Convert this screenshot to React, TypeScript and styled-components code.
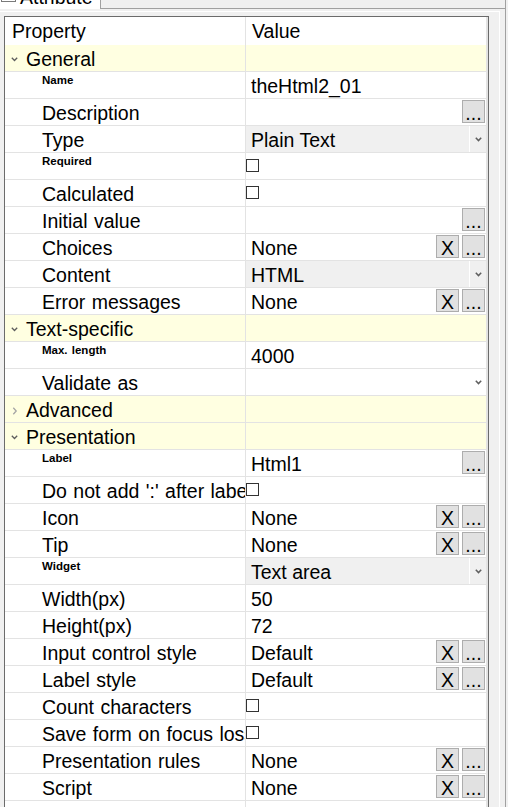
import React from "react";
import styled, { createGlobalStyle } from "styled-components";

const LINE = "#e3e3e3";
const YELLOW = "#ffffe1";
const FONT = `"Liberation Sans", Arial, sans-serif`;

const GlobalStyle = createGlobalStyle`
  *, *::before, *::after { box-sizing: border-box; }
  html, body { margin: 0; padding: 0; background: #f0f0f0; overflow: hidden; }
  body { font-family: ${FONT}; color: #000; }
`;

const Window = styled.div`
  width: 508px;
  height: 807px;
  overflow: hidden;
  background: #f0f0f0;
`;

const Frame = styled.div`
  width: 506px;
  height: 100%;
  border-right: 1px solid #a0a0a0;
  display: flex;
  flex-direction: column;
`;

const TabStrip = styled.div`
  display: flex;
  height: 9px;
  flex-shrink: 0;
`;

const Tab = styled.div`
  width: 101px;
  border-right: 1px solid #a0a0a0;
  background: #fff;
  overflow: hidden;
  display: flex;
  align-items: flex-start;
  gap: 3px;
  padding-left: 1px;
`;

const TabLabel = styled.span`
  margin-top: -13px;
  font-size: 19.5px;
  line-height: 20px;
  white-space: nowrap;
`;

const TabIcon = styled.svg`
  margin-top: -13px;
  flex-shrink: 0;
`;

const TabFiller = styled.div`
  flex: 1;
  border-bottom: 1px solid #a0a0a0;
`;

const Page = styled.div`
  flex: 1;
  min-height: 0;
  padding-top: 2px;
  display: flex;
  flex-direction: column;
`;

const Sheet = styled.div`
  width: 500px;
  flex: 1;
  min-height: 0;
  border-top: 1px solid #fff;
  border-right: 1px solid #fff;
  padding: 4px 0 0 4px;
  display: flex;
  flex-direction: column;
`;

const Grid = styled.div`
  width: 485px;
  flex: 1;
  min-height: 0;
  border: 1px solid #6b6b6b;
  border-bottom: none;
  background: #fff;
  overflow: hidden;
`;

const Row = styled.div<{ $header?: boolean }>`
  display: grid;
  grid-template-columns: 240px 240px;
  column-gap: 1px;
  padding-right: 2px;
  height: ${(p) => (p.$header ? "28px" : "27px")};
  border-bottom: ${(p) => (p.$header ? "none" : `1px solid ${LINE}`)};
  background: ${LINE};
`;

const HeadCell = styled.div<{ $indent: number }>`
  background: #fff;
  padding-left: ${(p) => p.$indent}px;
  font-size: 19.5px;
  line-height: 28px;
  white-space: nowrap;
`;

const NameCell = styled.div<{ $category?: boolean }>`
  background: ${(p) => (p.$category ? YELLOW : "#fff")};
  display: flex;
  align-items: flex-start;
  overflow: hidden;
  white-space: nowrap;
  min-width: 0;
`;

const Caption = styled.span<{ $small?: boolean }>`
  padding: 2px 0 0 37px;
  font-size: ${(p) => (p.$small ? "11.5px" : "19.5px")};
  font-weight: ${(p) => (p.$small ? 700 : 400)};
  line-height: ${(p) => (p.$small ? "12px" : "24px")};
  word-spacing: 1px;
`;

const CategoryCaption = styled.span`
  padding-top: 2px;
  margin-left: 8px;
  font-size: 19.5px;
  line-height: 24px;
`;

const ToggleIcon = styled.svg<{ $open: boolean }>`
  flex-shrink: 0;
  margin-left: 6px;
  margin-top: ${(p) => (p.$open ? "12px" : "11px")};
`;

const ValueCell = styled.div<{ $tone: "plain" | "combo" | "category" }>`
  background: ${(p) =>
    p.$tone === "category" ? YELLOW : p.$tone === "combo" ? "#f0f0f0" : "#fff"};
  display: flex;
  align-items: flex-start;
  overflow: hidden;
  white-space: nowrap;
  min-width: 0;
`;

const ValueText = styled.span`
  flex: 1;
  min-width: 0;
  overflow: hidden;
  padding: 2px 0 0 5px;
  font-size: 19.5px;
  line-height: 24px;
`;

const CellButton = styled.button<{ $last?: boolean }>`
  width: 23px;
  height: 23px;
  margin: 1px ${(p) => (p.$last ? "1px" : "3px")} 0 0;
  padding: 2px 0 0;
  border: 1px solid #adadad;
  background: #e1e1e1;
  color: #000;
  font-family: ${FONT};
  font-size: 19.5px;
  line-height: 21px;
  display: flex;
  align-items: flex-start;
  justify-content: center;
  flex-shrink: 0;
  overflow: hidden;
`;

const ComboArrow = styled.div<{ $flat?: boolean }>`
  width: 17px;
  height: 26px;
  flex-shrink: 0;
  border-left: 1px solid ${(p) => (p.$flat ? "transparent" : "#fff")};
  display: flex;
  align-items: center;
  justify-content: center;
`;

const CheckBox = styled.span`
  width: 13px;
  height: 13px;
  margin-top: 6px;
  border: 1px solid #333;
  background: #fff;
  flex-shrink: 0;
`;

type ValueSpec =
  | { type: "text"; text: string }
  | { type: "pick"; text?: string; clear?: boolean }
  | { type: "combo"; text?: string; flat?: boolean }
  | { type: "check" }
  | { type: "empty" };

type Item =
  | { kind: "category"; label: string; open: boolean }
  | { kind: "prop"; label: string; small?: boolean; value: ValueSpec };

const items: Item[] = [
  { kind: "category", label: "General", open: true },
  { kind: "prop", label: "Name", small: true, value: { type: "text", text: "theHtml2_01" } },
  { kind: "prop", label: "Description", value: { type: "pick" } },
  { kind: "prop", label: "Type", value: { type: "combo", text: "Plain Text" } },
  { kind: "prop", label: "Required", small: true, value: { type: "check" } },
  { kind: "prop", label: "Calculated", value: { type: "check" } },
  { kind: "prop", label: "Initial value", value: { type: "pick" } },
  { kind: "prop", label: "Choices", value: { type: "pick", text: "None", clear: true } },
  { kind: "prop", label: "Content", value: { type: "combo", text: "HTML" } },
  { kind: "prop", label: "Error messages", value: { type: "pick", text: "None", clear: true } },
  { kind: "category", label: "Text-specific", open: true },
  { kind: "prop", label: "Max. length", small: true, value: { type: "text", text: "4000" } },
  { kind: "prop", label: "Validate as", value: { type: "combo", flat: true } },
  { kind: "category", label: "Advanced", open: false },
  { kind: "category", label: "Presentation", open: true },
  { kind: "prop", label: "Label", small: true, value: { type: "pick", text: "Html1" } },
  { kind: "prop", label: "Do not add ':' after label", value: { type: "check" } },
  { kind: "prop", label: "Icon", value: { type: "pick", text: "None", clear: true } },
  { kind: "prop", label: "Tip", value: { type: "pick", text: "None", clear: true } },
  { kind: "prop", label: "Widget", small: true, value: { type: "combo", text: "Text area" } },
  { kind: "prop", label: "Width(px)", value: { type: "text", text: "50" } },
  { kind: "prop", label: "Height(px)", value: { type: "text", text: "72" } },
  { kind: "prop", label: "Input control style", value: { type: "pick", text: "Default", clear: true } },
  { kind: "prop", label: "Label style", value: { type: "pick", text: "Default", clear: true } },
  { kind: "prop", label: "Count characters", value: { type: "check" } },
  { kind: "prop", label: "Save form on focus loss", value: { type: "check" } },
  { kind: "prop", label: "Presentation rules", value: { type: "pick", text: "None", clear: true } },
  { kind: "prop", label: "Script", value: { type: "pick", text: "None", clear: true } },
  { kind: "prop", label: "", value: { type: "empty" } },
];

const Toggle: React.FC<{ open: boolean }> = ({ open }) =>
  open ? (
    <ToggleIcon $open width="7" height="5" viewBox="0 0 7 5">
      <polyline points="0.8,0.8 3.5,3.5 6.2,0.8" fill="none" stroke="#5c5c5c" strokeWidth="1.3" />
    </ToggleIcon>
  ) : (
    <ToggleIcon $open={false} width="7" height="8" viewBox="0 0 7 8">
      <polyline points="2.3,0.8 5.2,4 2.3,7.2" fill="none" stroke="#a6a6a6" strokeWidth="1.3" />
    </ToggleIcon>
  );

const Chevron = () => (
  <svg width="7" height="5" viewBox="0 0 7 5">
    <polyline points="0.8,0.8 3.5,3.6 6.2,0.8" fill="none" stroke="#5f5f5f" strokeWidth="1.5" />
  </svg>
);

const Value: React.FC<{ spec: ValueSpec }> = ({ spec }) => {
  switch (spec.type) {
    case "text":
      return (
        <ValueCell $tone="plain">
          <ValueText>{spec.text}</ValueText>
        </ValueCell>
      );
    case "pick":
      return (
        <ValueCell $tone="plain">
          <ValueText>{spec.text}</ValueText>
          {spec.clear && <CellButton type="button">X</CellButton>}
          <CellButton type="button" $last>
            ...
          </CellButton>
        </ValueCell>
      );
    case "combo":
      return (
        <ValueCell $tone={spec.flat ? "plain" : "combo"}>
          <ValueText>{spec.text}</ValueText>
          <ComboArrow $flat={spec.flat}>
            <Chevron />
          </ComboArrow>
        </ValueCell>
      );
    case "check":
      return (
        <ValueCell $tone="plain">
          <CheckBox role="checkbox" aria-checked="false" />
        </ValueCell>
      );
    default:
      return <ValueCell $tone="plain" />;
  }
};

export default function App() {
  return (
    <Window>
      <GlobalStyle />
      <Frame>
        <TabStrip>
          <Tab>
            <TabIcon width="16" height="16" viewBox="0 0 16 16">
              <rect x="0.5" y="1.5" width="14" height="13" fill="#fff" stroke="#7a7a7a" />
              <line x1="0.5" y1="4.5" x2="14.5" y2="4.5" stroke="#7a7a7a" />
            </TabIcon>
            <TabLabel>Attribute</TabLabel>
          </Tab>
          <TabFiller />
        </TabStrip>
        <Page>
          <Sheet>
            <Grid>
              <Row $header>
                <HeadCell $indent={7}>Property</HeadCell>
                <HeadCell $indent={6}>Value</HeadCell>
              </Row>
              {items.map((item, i) =>
                item.kind === "category" ? (
                  <Row key={i}>
                    <NameCell $category>
                      <Toggle open={item.open} />
                      <CategoryCaption>{item.label}</CategoryCaption>
                    </NameCell>
                    <ValueCell $tone="category" />
                  </Row>
                ) : (
                  <Row key={i}>
                    <NameCell>
                      <Caption $small={item.small}>{item.label}</Caption>
                    </NameCell>
                    <Value spec={item.value} />
                  </Row>
                )
              )}
            </Grid>
          </Sheet>
        </Page>
      </Frame>
    </Window>
  );
}
